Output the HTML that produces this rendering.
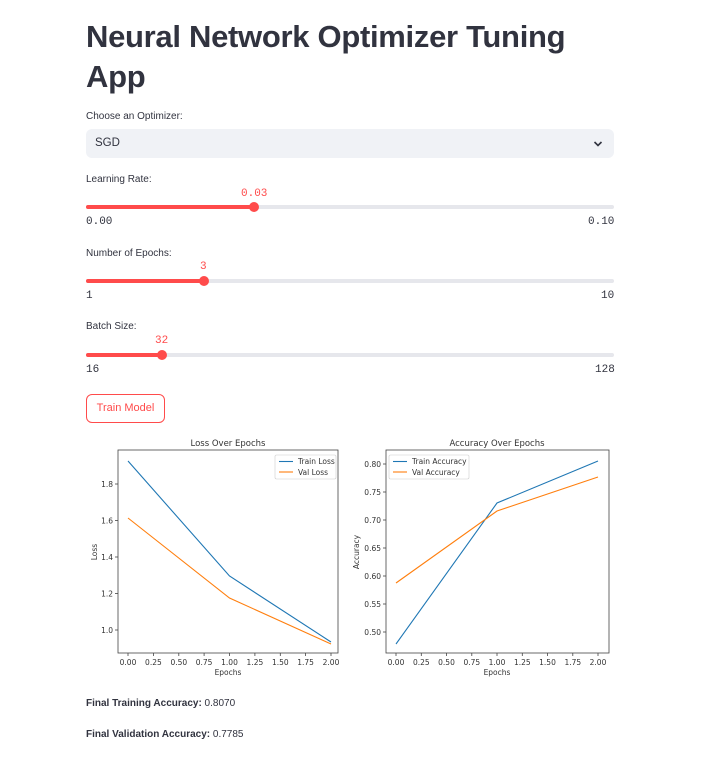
<!DOCTYPE html>
<html><head><meta charset="utf-8"><style>
*{margin:0;padding:0;box-sizing:border-box}
body{width:718px;height:784px;background:#fff;font-family:"Liberation Sans",sans-serif;color:#31333f;position:relative;overflow:hidden}
.a{position:absolute;white-space:nowrap}
h1{position:absolute;left:86px;top:17px;font-size:31px;line-height:40px;font-weight:700;color:#31333f;letter-spacing:-0.3px}
.lbl{font-size:10px;color:#31333f}
.mono{font-family:"Liberation Mono",monospace;font-size:11px}
.track{position:absolute;left:86px;width:528px;height:4px;background:#e6e7ec;border-radius:2px}
.fill{position:absolute;left:0;top:0;height:4px;background:#ff4b4b;border-radius:2px}
.thumb{position:absolute;top:-3px;width:10px;height:10px;border-radius:50%;background:#ff4b4b}
.red{color:#ff4b4b}
</style></head><body>
<h1>Neural Network Optimizer Tuning<br>App</h1>
<div class="a lbl" style="left:86px;top:111px">Choose an Optimizer:</div>
<div class="a" style="left:86px;top:129px;width:528px;height:29px;background:#f0f2f6;border-radius:6px"></div>
<div class="a" style="left:95px;top:137px;font-size:11.5px">SGD</div>
<svg class="a" style="left:593px;top:140px" width="10" height="8"><path d="M1.5 2 L5 5.5 L8.5 2" stroke="#31333f" stroke-width="1.6" fill="none"/></svg>

<div class="a lbl" style="left:86px;top:174px">Learning Rate:</div>
<div class="a mono red" style="left:241px;top:188px">0.03</div>
<div class="track" style="top:205px"><div class="fill" style="width:168px"></div><div class="thumb" style="left:163px"></div></div>
<div class="a mono" style="left:86px;top:216px">0.00</div>
<div class="a mono" style="left:588px;top:216px">0.10</div>

<div class="a lbl" style="left:86px;top:248px">Number of Epochs:</div>
<div class="a mono red" style="left:200px;top:261px">3</div>
<div class="track" style="top:279px"><div class="fill" style="width:118px"></div><div class="thumb" style="left:113px"></div></div>
<div class="a mono" style="left:86px;top:290px">1</div>
<div class="a mono" style="left:601px;top:290px">10</div>

<div class="a lbl" style="left:86px;top:321px">Batch Size:</div>
<div class="a mono red" style="left:155px;top:335px">32</div>
<div class="track" style="top:353px"><div class="fill" style="width:76px"></div><div class="thumb" style="left:71px"></div></div>
<div class="a mono" style="left:86px;top:364px">16</div>
<div class="a mono" style="left:595px;top:364px">128</div>

<div class="a" style="left:86px;top:394px;width:79px;height:29px;border:1px solid #ff4b4b;border-radius:6px;color:#ff4b4b;font-size:11px;text-align:center;line-height:27px">Train Model</div>

<svg class="a" style="left:0;top:0" width="718" height="784" font-family="DejaVu Sans, sans-serif" font-size="7.5" fill="#333">
<text x="228" y="446" text-anchor="middle" font-size="8.5">Loss Over Epochs</text>
<rect x="118" y="450" width="220" height="203" fill="none" stroke="#444" stroke-width="0.8"/>
<g stroke="#444" stroke-width="0.8">
<line x1="128" y1="653" x2="128" y2="656"/><line x1="153.4" y1="653" x2="153.4" y2="656"/><line x1="178.8" y1="653" x2="178.8" y2="656"/><line x1="204.1" y1="653" x2="204.1" y2="656"/><line x1="229.5" y1="653" x2="229.5" y2="656"/><line x1="254.9" y1="653" x2="254.9" y2="656"/><line x1="280.3" y1="653" x2="280.3" y2="656"/><line x1="305.6" y1="653" x2="305.6" y2="656"/><line x1="331" y1="653" x2="331" y2="656"/>
<line x1="115" y1="484" x2="118" y2="484"/><line x1="115" y1="520.5" x2="118" y2="520.5"/><line x1="115" y1="557" x2="118" y2="557"/><line x1="115" y1="593.5" x2="118" y2="593.5"/><line x1="115" y1="630" x2="118" y2="630"/>
</g>
<g text-anchor="middle">
<text x="128" y="665">0.00</text><text x="153.4" y="665">0.25</text><text x="178.8" y="665">0.50</text><text x="204.1" y="665">0.75</text><text x="229.5" y="665">1.00</text><text x="254.9" y="665">1.25</text><text x="280.3" y="665">1.50</text><text x="305.6" y="665">1.75</text><text x="331" y="665">2.00</text>
<text x="228" y="675">Epochs</text>
</g>
<g text-anchor="end">
<text x="113" y="487">1.8</text><text x="113" y="523.5">1.6</text><text x="113" y="560">1.4</text><text x="113" y="596.5">1.2</text><text x="113" y="633">1.0</text>
</g>
<text x="97" y="552" text-anchor="middle" transform="rotate(-90 97 552)">Loss</text>
<polyline points="128,461 229.5,576 331,642" fill="none" stroke="#1f77b4" stroke-width="1.1"/>
<polyline points="128,518 229.5,598 331,644" fill="none" stroke="#ff7f0e" stroke-width="1.1"/>
<rect x="275" y="455" width="61" height="24" fill="#fff" stroke="#ccc" stroke-width="0.6" rx="1.5"/>
<line x1="279" y1="461.5" x2="293" y2="461.5" stroke="#1f77b4" stroke-width="1.1"/>
<line x1="279" y1="472" x2="293" y2="472" stroke="#ff7f0e" stroke-width="1.1"/>
<text x="298" y="464">Train Loss</text><text x="298" y="475">Val Loss</text>

<text x="497" y="446" text-anchor="middle" font-size="8.5">Accuracy Over Epochs</text>
<rect x="386" y="450" width="223" height="203" fill="none" stroke="#444" stroke-width="0.8"/>
<g stroke="#444" stroke-width="0.8">
<line x1="396" y1="653" x2="396" y2="656"/><line x1="421.3" y1="653" x2="421.3" y2="656"/><line x1="446.5" y1="653" x2="446.5" y2="656"/><line x1="471.8" y1="653" x2="471.8" y2="656"/><line x1="497" y1="653" x2="497" y2="656"/><line x1="522.3" y1="653" x2="522.3" y2="656"/><line x1="547.5" y1="653" x2="547.5" y2="656"/><line x1="572.8" y1="653" x2="572.8" y2="656"/><line x1="598" y1="653" x2="598" y2="656"/>
<line x1="383" y1="464" x2="386" y2="464"/><line x1="383" y1="492" x2="386" y2="492"/><line x1="383" y1="520" x2="386" y2="520"/><line x1="383" y1="548" x2="386" y2="548"/><line x1="383" y1="576" x2="386" y2="576"/><line x1="383" y1="604" x2="386" y2="604"/><line x1="383" y1="632" x2="386" y2="632"/>
</g>
<g text-anchor="middle">
<text x="396" y="665">0.00</text><text x="421.3" y="665">0.25</text><text x="446.5" y="665">0.50</text><text x="471.8" y="665">0.75</text><text x="497" y="665">1.00</text><text x="522.3" y="665">1.25</text><text x="547.5" y="665">1.50</text><text x="572.8" y="665">1.75</text><text x="598" y="665">2.00</text>
<text x="497" y="675">Epochs</text>
</g>
<g text-anchor="end">
<text x="381" y="467">0.80</text><text x="381" y="495">0.75</text><text x="381" y="523">0.70</text><text x="381" y="551">0.65</text><text x="381" y="579">0.60</text><text x="381" y="607">0.55</text><text x="381" y="635">0.50</text>
</g>
<text x="359" y="552" text-anchor="middle" transform="rotate(-90 359 552)">Accuracy</text>
<polyline points="396,644 497,503 598,461" fill="none" stroke="#1f77b4" stroke-width="1.1"/>
<polyline points="396,583 497,511 598,477" fill="none" stroke="#ff7f0e" stroke-width="1.1"/>
<rect x="389" y="455" width="80" height="24" fill="#fff" stroke="#ccc" stroke-width="0.6" rx="1.5"/>
<line x1="393" y1="461.5" x2="407" y2="461.5" stroke="#1f77b4" stroke-width="1.1"/>
<line x1="393" y1="472" x2="407" y2="472" stroke="#ff7f0e" stroke-width="1.1"/>
<text x="412" y="464">Train Accuracy</text><text x="412" y="475">Val Accuracy</text>
</svg>

<div class="a" style="left:86px;top:698px;font-size:10px"><b>Final Training Accuracy:</b> 0.8070</div>
<div class="a" style="left:86px;top:729px;font-size:10px"><b>Final Validation Accuracy:</b> 0.7785</div>
</body></html>
